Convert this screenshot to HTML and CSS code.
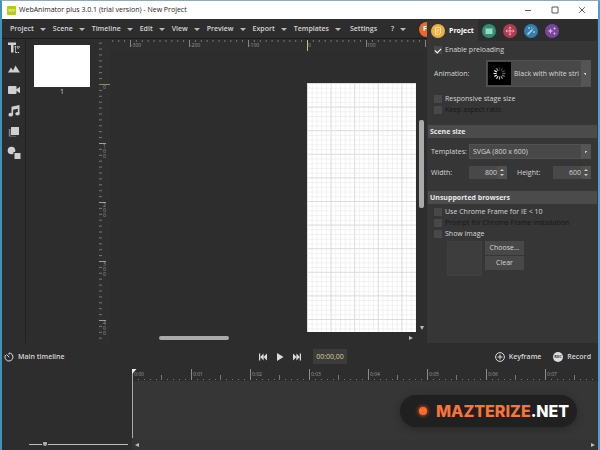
FILE: index.html
```html
<!DOCTYPE html>
<html lang="en">
<head>
<meta charset="utf-8">
<title>WebAnimator plus</title>
<link rel="stylesheet" href="styles.css">
</head>
<body>
<header class="titlebar">
  <svg class="app-logo" viewBox="0 0 9 9" aria-hidden="true"><rect width="9" height="9" rx="1" fill="#b5cc18"/><path d="M1.500 3l1 2.500 1-2.500 1 2.500 1-2.500M6 5.500l1-2.500 1 2.500" fill="none" stroke="#eef5a0" stroke-width=".7"/></svg>
  <h1 class="title">WebAnimator plus 3.0.1 (trial version) - New Project</h1>
  <button class="win-btn" aria-label="Minimize"><svg viewBox="0 0 8 8"><path d="M1 4.500h6"/></svg></button>
  <button class="win-btn" aria-label="Maximize"><svg viewBox="0 0 8 8"><path d="M1 1h6v6h-6z"/></svg></button>
  <button class="win-btn" aria-label="Close"><svg viewBox="0 0 8 8"><path d="M1.200 1.200l5.600 5.600M6.800 1.200l-5.600 5.600"/></svg></button>
</header>
<main class="upper">
  <section class="editor">
    <nav class="menu">
      <button class="menu-item has-arrow">Project</button>
      <button class="menu-item has-arrow">Scene</button>
      <button class="menu-item has-arrow">Timeline</button>
      <button class="menu-item has-arrow">Edit</button>
      <button class="menu-item has-arrow">View</button>
      <button class="menu-item has-arrow">Preview</button>
      <button class="menu-item has-arrow">Export</button>
      <button class="menu-item has-arrow">Templates</button>
      <button class="menu-item settings">Settings</button>
      <button class="menu-item has-arrow">?</button>
      <button class="promo">F</button>
    </nav>
    <div class="work">
      <div class="tools">
        <button aria-label="Text"><svg viewBox="0 0 12 12"><path d="M0 .5h8v2.500h-2.500v7.500h-2.500v-7.500h-3z"/><path d="M6.500 5h5.500M7.500 4v7M7.500 10.500h4M10 4v3" stroke="#d0d0d0" fill="none" stroke-dasharray="1.500 .7"/></svg></button>
        <button aria-label="Image"><svg viewBox="0 0 12 12"><path d="M0 9.500l3-5 2 3 2.500-5 4.500 7z"/></svg></button>
        <button aria-label="Video"><svg viewBox="0 0 12 12"><rect y="2" width="8.500" height="8" rx="1"/><path d="M8 5.500l4-2.700v6.500l-4-2.700z"/></svg></button>
        <button aria-label="Audio"><svg viewBox="0 0 12 12"><path d="M3.500 1.700l8-1.700v8.700h-1.700v-5l-4.700 1v5h-1.600z"/><ellipse cx="2.700" cy="9.700" rx="2.300" ry="1.900"/><ellipse cx="9.500" cy="8.700" rx="2.200" ry="1.800"/></svg></button>
        <button aria-label="Symbol"><svg viewBox="0 0 12 12"><rect x=".8" y="3" width="7.500" height="7.500" fill="#858585"/><path d="M2.400 .9h9v9h-9z" fill="#2d2d2d"/><rect x="3" y="1" width="8" height="8"/></svg></button>
        <button aria-label="Shapes"><svg viewBox="0 0 12 12"><circle cx="3.500" cy="3.500" r="3.800"/><path d="M5.500 5h7v7h-7z" fill="#2d2d2d"/><rect x="6.500" y="6" width="6" height="6"/></svg></button>
      </div>
      <div class="scenes">
        <button class="thumb" aria-label="Scene 1"></button>
        <span>1</span>
      </div>
      <div class="v-ruler">
        <svg width="100%" height="100%" aria-hidden="true">
          <defs><pattern id="vt" y="45" width="12" height="59" patternUnits="userSpaceOnUse"><path d="M1 .5h7" stroke="#a0a0a0"/><path d="M1 6.400h3M1 12.300h3M1 18.200h3M1 24.100h3M1 30h3M1 35.900h3M1 41.800h3M1 47.700h3M1 53.600h3" stroke="#858585" stroke-width=".8"/></pattern></defs>
          <rect width="12" height="100%" fill="url(#vt)"/>
          <path d="M1 45.500h11" stroke="#8c8c68"/>
          <g class="tick-text"><text x="5" y="50">0</text>
          <text x="5" y="109">1</text><text x="5" y="114">0</text><text x="5" y="119">0</text>
          <text x="5" y="168">2</text><text x="5" y="173">0</text><text x="5" y="178">0</text>
          <text x="5" y="227">3</text><text x="5" y="232">0</text><text x="5" y="237">0</text>
          <text x="5" y="286">4</text><text x="5" y="291">0</text><text x="5" y="296">0</text></g>
        </svg>
      </div>
      <div class="stage">
        <svg class="h-ruler" width="100%" height="12" aria-hidden="true">
          <defs><pattern id="ht" x="20" width="59" height="12" patternUnits="userSpaceOnUse"><path d="M.5 1v7" stroke="#858585"/><path d="M6.400 1v2M12.300 1v2M18.200 1v2M24.100 1v2M30 1v2M35.900 1v2M41.800 1v2M47.700 1v2M53.600 1v2" stroke="#858585" stroke-width=".8"/></pattern></defs>
          <rect width="100%" height="12" fill="#2e2e2e"/><rect width="100%" height="12" fill="url(#ht)"/>
          <path d="M197.500 1v11" stroke="#c5c56c"/>
          <g class="tick-text"><text x="21" y="8">-300</text><text x="80" y="8">-200</text><text x="139" y="8">-100</text><text x="198" y="8">0</text><text x="257" y="8">100</text></g>
        </svg>
        <div class="viewport">
          <svg class="page" aria-label="Scene canvas">
            <defs>
              <pattern id="minor" width="4.720" height="4.720" patternUnits="userSpaceOnUse"><path d="M0 .3h4.720M.3 0v4.720" stroke="#e6e6e6" stroke-width=".7"/></pattern>
              <pattern id="major" width="23.600" height="23.600" patternUnits="userSpaceOnUse"><path d="M0 .4h23.600M.4 0v23.600" stroke="#d2d2d2" stroke-width=".7"/></pattern>
            </defs>
            <rect width="100%" height="100%" fill="#fff"/><rect width="100%" height="100%" fill="url(#minor)"/><rect width="100%" height="100%" fill="url(#major)"/>
          </svg>
          <div class="v-scroll"><i class="v-thumb"></i><i class="arrow-down"></i></div>
        </div>
        <div class="h-scroll"><i class="h-thumb"></i><i class="arrow-right"></i></div>
      </div>
    </div>
  </section>
  <aside class="panel">
    <div class="tabs">
      <button class="tab active"><svg viewBox="0 0 14 14"><circle cx="7" cy="7" r="7" fill="#eeb045"/><path d="M4.500 3.500h5v5.500l-2 1.500h-3zM5.500 6h3M5.500 8h2" fill="none" stroke="#ffe4a4"/></svg>Project</button>
      <button class="tab" aria-label="Scene"><svg viewBox="0 0 14 14"><circle cx="7" cy="7" r="7" fill="#328d75"/><path d="M3.500 4h1v1h1v-1h1v1h1v-1h1v1h1v-1h1v6h-7z" fill="#98d8bd"/></svg></button>
      <button class="tab" aria-label="Position"><svg viewBox="0 0 14 14"><circle cx="7" cy="7" r="7" fill="#aa3d50"/><path d="M7 3v8M3 7h8M5.700 4.200L7 2.900l1.300 1.300M5.700 9.800L7 11.100l1.300-1.300M4.200 5.700L2.900 7l1.300 1.300M9.800 5.700L11.100 7 9.800 8.300" fill="none" stroke="#edaab4"/></svg></button>
      <button class="tab" aria-label="Appearance"><svg viewBox="0 0 14 14"><circle cx="7" cy="7" r="7" fill="#347dac"/><path d="M3.500 10.500l5-5" stroke="#a8d7ef" stroke-width="1.600"/><path d="M9 4.800l1-1M5 3v2M4 4h2M10 7v2M9 8h2M7.500 3v1" stroke="#a8d7ef" stroke-width=".8"/></svg></button>
      <button class="tab" aria-label="Effects"><svg viewBox="0 0 14 14"><circle cx="7" cy="7" r="7" fill="#77469a"/><path d="M5.500 4l.8 2.200 2.200.8-2.200.8-.8 2.200-.8-2.200-2.200-.8 2.200-.8zM9.500 2.800l.5 1.200 1.200.5-1.200.5-.5 1.200-.5-1.200-1.200-.5 1.200-.5zM9.500 7.800l.5 1.200 1.200.5-1.200.5-.5 1.200-.5-1.200-1.200-.5 1.200-.5z" fill="#d7b1ea"/></svg></button>
    </div>
    <div class="group first">
      <label class="check"><input type="checkbox" checked>Enable preloading</label>
      <div class="animation">
        <label for="anim">Animation:</label>
        <div class="picker">
          <svg class="spinner" viewBox="0 0 23 23" aria-hidden="true"><rect width="23" height="23" fill="#000"/><g stroke="#fff" stroke-width="1.200"><path d="M11.500 5.500v3" opacity=".2"/><path d="M14.500 6.300l-1.500 2.600" opacity=".25"/><path d="M16.700 8.500l-2.600 1.500" opacity=".3"/><path d="M17.500 11.500h-3" opacity=".4"/><path d="M16.700 14.500l-2.600-1.500" opacity=".5"/><path d="M14.500 16.700l-1.500-2.600" opacity=".6"/><path d="M11.500 17.500v-3" opacity=".7"/><path d="M8.500 16.700l1.500-2.600" opacity=".85"/><path d="M6.300 14.500l2.600-1.500M5.500 11.500h3M6.300 8.500l2.600 1.500"/><path d="M8.500 6.300l1.500 2.600" opacity=".6"/></g></svg>
          <select id="anim"><option>Black with white stri</option></select>
        </div>
      </div>
      <label class="check"><input type="checkbox">Responsive stage size</label>
      <label class="check off"><input type="checkbox" disabled>Keep aspect ratio</label>
    </div>
    <h2>Scene size</h2>
    <div class="group size">
      <div class="line"><label class="name" for="tpl">Templates:</label><div class="picker small"><select id="tpl"><option>SVGA (800 x 600)</option></select></div></div>
      <div class="line"><label class="name" for="w">Width:</label><div class="number"><input id="w" value="800"><i></i></div><label class="height" for="h">Height:</label><div class="number"><input id="h" value="600"><i></i></div></div>
    </div>
    <h2>Unsupported browsers</h2>
    <div class="group last">
      <label class="check"><input type="checkbox">Use Chrome Frame for IE &lt; 10</label>
      <label class="check off"><input type="checkbox" disabled>Prompt for Chrome Frame installation</label>
      <label class="check"><input type="checkbox">Show image</label>
      <div class="image-row"><div class="preview"></div><div class="image-buttons"><button>Choose...</button><button>Clear</button></div></div>
    </div>
  </aside>
</main>
<section class="timeline">
  <div class="transport">
    <div class="tl-name"><svg width="10" height="10" viewBox="0 0 10 10" fill="none" stroke="#ddd"><path d="M5 1a4 4 0 1 1-3.500 2M5 1v1.500M2.500 2.500l2.700 2.700" /></svg>Main timeline</div>
    <div class="play">
      <button aria-label="Start"><svg viewBox="0 0 8 8"><path d="M0 .5h1.200v7h-1.200zM4.600.5v7l-3.400-3.500zM8 .5v7l-3.400-3.500z"/></svg></button>
      <button aria-label="Play"><svg viewBox="0 0 8 8"><path d="M1 0l6.500 4-6.500 4z"/></svg></button>
      <button aria-label="End"><svg viewBox="0 0 8 8"><path d="M0 .5v7l3.400-3.500zM3.400.5v7l3.400-3.500zM6.800.5h1.200v7h-1.200z"/></svg></button>
      <output class="time">00:00,00</output>
    </div>
    <div class="actions">
      <button><svg width="10" height="10" viewBox="0 0 10 10" fill="none" stroke="#ddd"><circle cx="5" cy="5" r="4.400"/><path d="M5 2.500v5M2.500 5h5"/></svg>Keyframe</button>
      <button><svg width="10" height="10" viewBox="0 0 10 10"><circle cx="5" cy="5" r="5" fill="#ddd"/><text class="rec" x="5" y="6.400" text-anchor="middle">REC</text></svg>Record</button>
    </div>
  </div>
  <div class="tl-body">
    <div class="layers"><input class="zoom" type="range" min="0" max="100" value="14" aria-label="Timeline zoom"></div>
    <div class="tracks">
      <div class="time-ruler">
        <svg class="time-ticks" width="100%" height="13" aria-hidden="true"><defs><pattern id="tt" width="59" height="13" patternUnits="userSpaceOnUse"><path d="M.5 1v11" stroke="#8c8c8c"/><path d="M29.500 7v5" stroke="#777"/><path d="M6.500 11v1M12.500 11v1M18.500 11v1M24.500 11v1M35.500 11v1M41.500 11v1M47.500 11v1M53.500 11v1" stroke="#777"/></pattern></defs><rect width="100%" height="13" fill="url(#tt)"/></svg>
        <span>0:00</span><span>0:01</span><span>0:02</span><span>0:03</span><span>0:04</span><span>0:05</span><span>0:06</span><span>0:07</span>
      </div>
      <div class="lane"></div>
      <svg class="playhead" viewBox="0 0 5 69" aria-hidden="true"><path d="M.5 0v69" stroke="#aaa"/><path d="M0 0h4.500l-4.500 5z" fill="#eee"/></svg>
      <div class="tl-scroll"><i class="arrow-left"></i><i class="arrow-right"></i></div>
    </div>
  </div>
</section>
<div class="badge"><i></i><span><b>MAZTERIZE</b>.NET</span></div>
</body>
</html>
```
FILE: styles.css
```css
* { box-sizing: border-box; }
body {
  margin: 0;
  height: 100vh;
  display: flex;
  flex-direction: column;
  overflow: hidden;
  border-left: 2px solid #4193b8;
  border-right: 2px solid #4a9fd6;
  border-top: 1px solid #91a9b5;
  background: #2d2d2d;
  color: #d6d6d6;
  font: 7px/10px "Open Sans", "Noto Sans", sans-serif;
}
button, input, select { font: inherit; color: inherit; border: 0; padding: 0; margin: 0; background: none; }
svg { display: block; flex: none; }
h1, h2 { margin: 0; font-size: inherit; }
i { display: block; flex: none; }

.titlebar { height: 18px; flex: none; display: flex; align-items: center; background: #fff; color: #222; padding: 0 3px 0 5px; }
.app-logo { width: 9px; height: 9px; }
.title { font: 7px/10px "Open Sans", sans-serif; margin-left: 3px; flex: 1; }
.win-btn { width: 27px; display: flex; justify-content: center; }
.win-btn svg { width: 8px; height: 8px; fill: none; stroke: #333; stroke-width: 0.8; }

.upper { flex: 1; min-height: 0; display: flex; }
.editor { flex: 1; min-width: 0; display: flex; flex-direction: column; }
.menu { height: 20px; flex: none; display: flex; align-items: center; gap: 7px; padding: 1px 0 0 8px; border-bottom: 1px solid #1c1c1c; overflow: hidden; }
.menu-item { flex: none; display: flex; align-items: center; gap: 6px; font-weight: 600; }
.has-arrow::after { content: ""; border: 3px solid transparent; border-top-color: #bbb; border-bottom: 0; }
.settings { margin: 0 7px 0 2px; }
.promo { width: 15px; height: 15px; border-radius: 50%; background: #f36628; color: #fff; font-weight: 700; flex: none; margin-left: auto; margin-right: -7px; text-align: left; padding-left: 4px; }
.work { flex: 1; min-height: 0; display: flex; }
.tools { width: 24px; flex: none; display: flex; flex-direction: column; gap: 9px; padding: 3px 0 0 6px; border-right: 1px solid #202020; }
.tools button { width: 12px; height: 12px; }
.tools svg { width: 12px; height: 12px; fill: #d0d0d0; overflow: visible; }
.scenes { width: 72px; flex: none; display: flex; flex-direction: column; align-items: center; padding-top: 6px; }
.thumb { width: 56px; height: 42px; background: #fff; flex: none; }
.v-ruler { width: 12px; flex: none; background: #2f2f2f; }
.tick-text { font: 5px "Open Sans", sans-serif; fill: #999; }
.stage { flex: 1; min-width: 0; display: flex; flex-direction: column; }
.viewport { flex: 1; min-height: 0; display: flex; padding: 32px 0 0 197px; }
.page { flex: 1; min-width: 0; height: 100%; }
.v-scroll { width: 11px; flex: none; display: flex; flex-direction: column; align-items: center; justify-content: space-between; padding: 37px 0 2px; }
.v-thumb { width: 5px; height: 88px; background: #aaa; border-radius: 2px; }
.h-scroll { height: 11px; display: flex; align-items: center; justify-content: space-between; padding: 0 14px 0 49px; }
.h-thumb { width: 70px; height: 4px; background: #aaa; border-radius: 2px; }
.arrow-down { border: 2px solid transparent; border-top: 4px solid #bbb; border-bottom: 0; }
.arrow-right { border: 2px solid transparent; border-left: 4px solid #bbb; border-right: 0; }
.arrow-left { border: 2px solid transparent; border-right: 4px solid #bbb; border-left: 0; }

.panel { width: 171px; flex: none; background: #363636; padding-right: 1px; }
.tabs { height: 22px; display: flex; background: #2d2d2d; padding-top: 1px; }
.tab { width: 21px; display: flex; align-items: center; justify-content: center; }
.tab svg { width: 14px; height: 14px; }
.active { width: 51px; justify-content: flex-start; gap: 4px; padding-left: 4px; background: #363636; font-weight: 700; color: #fff; }
.group { padding: 0 6px 0 7px; }
.first { padding-top: 3px; height: 84px; }
.last { padding-top: 2px; }
.check { display: flex; align-items: center; gap: 3px; height: 11px; }
.check input { appearance: none; width: 8px; height: 8px; background: #484848; flex: none; display: grid; place-items: center; }
.check input:checked::after { content: ""; width: 5px; height: 3px; border: solid #fff; border-width: 0 0 1px 1px; transform: rotate(-45deg); }
.off { color: #161616; }
.animation { display: flex; align-items: center; justify-content: space-between; margin: 5px 0 6px; }
.picker { width: 105px; height: 27px; display: flex; align-items: center; background: #484848; border: 1px solid #525252; padding-left: 1px; position: relative; }
.picker::after { content: ""; position: absolute; right: 0; top: 0; bottom: 0; width: 9px; background: radial-gradient(circle, #ccc 1px, #555 1px); pointer-events: none; }
.spinner { width: 23px; height: 23px; }
.picker select { appearance: none; flex: 1; min-width: 0; height: 100%; padding: 0 9px 0 3px; outline: 0; }
.small { width: 122px; height: 15px; padding-left: 0; }
h2 { height: 13px; line-height: 13px; margin-left: 1px; background: #4b4b4b; padding-left: 2px; font-weight: 700; color: #e8e8e8; }
.size { padding-left: 4px; height: 53px; padding-top: 6px; }
.line { display: flex; align-items: center; margin-bottom: 7px; }
.name { flex: 1; }
.number { width: 38px; height: 13px; display: flex; background: #484848; }
.number input { width: 28px; text-align: right; }
.number i { width: 10px; display: flex; flex-direction: column; align-items: center; justify-content: center; gap: 3px; background: #505050; }
.number i::before, .number i::after { content: ""; border: 2px solid transparent; border-bottom-color: #ccc; border-top: 0; }
.number i::after { border-top: 2px solid #ccc; border-bottom: 0; }
.height { width: 46px; padding-left: 10px; }
.image-row { display: flex; gap: 3px; padding: 2px 0 0 13px; }
.preview { width: 35px; height: 35px; background: #3d3d3d; border: 1px solid #404040; }
.image-buttons { display: flex; flex-direction: column; gap: 1px; }
.image-buttons button { width: 39px; height: 14px; background: #484848; }

.timeline { height: 107px; flex: none; display: flex; flex-direction: column; }
.transport { height: 25px; flex: none; display: grid; grid-template-columns: 1fr auto 1fr; align-items: center; padding-top: 2px; font-weight: 600; }
.tl-name { display: flex; align-items: center; gap: 4px; padding-left: 2px; }
.play { display: flex; align-items: center; gap: 9px; padding-left: 6px; }
.play svg { width: 8px; height: 8px; fill: #ddd; }
.time { width: 34px; height: 15px; line-height: 15px; text-align: center; background: #3c3c3c; color: #d4cf90; margin-left: 3px; font-weight: 400; }
.actions { display: flex; justify-content: flex-end; gap: 12px; padding-right: 7px; }
.actions button { display: flex; align-items: center; gap: 4px; font-weight: 600; }
.rec { font: 700 4px "Open Sans", sans-serif; fill: #333; }
.tl-body { flex: 1; display: flex; min-height: 0; }
.layers { width: 130px; flex: none; display: flex; align-items: flex-end; padding: 0 4px 2px 27px; }
.zoom { appearance: none; width: 100%; height: 7px; }
.zoom::-webkit-slider-runnable-track { height: 7px; background: linear-gradient(#bbb, #bbb) center / 100% 1px no-repeat; }
.zoom::-webkit-slider-thumb { appearance: none; width: 6px; height: 6px; border-radius: 1px 1px 3px 3px; background: #aaa; border: 1px solid #222; }
.tracks { flex: 1; min-width: 0; display: flex; flex-direction: column; position: relative; }
.time-ruler { height: 13px; flex: none; display: flex; overflow: hidden; position: relative; }
.time-ruler span { width: 59px; flex: none; padding-left: 2px; font-size: 5px; line-height: 13px; color: #999; }
.time-ticks { position: absolute; inset: 0; }
.lane { flex: 1; background: #363636; }
.playhead { position: absolute; left: 0; top: 1px; width: 5px; height: 69px; }
.tl-scroll { height: 11px; background: #343434; display: flex; align-items: center; justify-content: space-between; padding: 0 3px; }

.badge { position: absolute; right: 23px; bottom: 23px; width: 177px; height: 32px; border-radius: 16px; background: #202020; box-shadow: 0 2px 8px #0004; display: flex; align-items: center; gap: 9px; padding-left: 19px; font: 800 16px/20px Inter, sans-serif; color: #fff; }
.badge i { width: 8px; height: 8px; border-radius: 50%; background: #ff6b2b; box-shadow: 0 0 4px #ff6b2b; }
.badge b { color: #f87439; font-weight: 800; }
```
